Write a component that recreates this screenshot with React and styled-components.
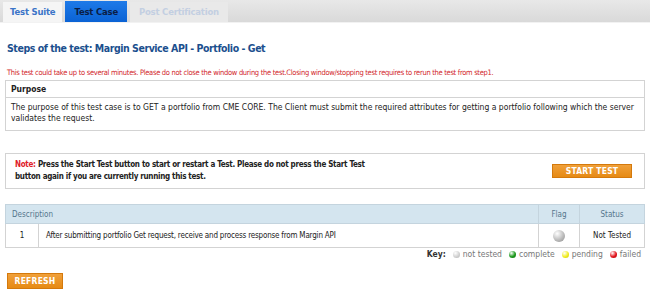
import React from 'react';
import styled, { createGlobalStyle } from 'styled-components';

const GlobalStyle = createGlobalStyle`
  body {
    margin: 0;
    background: #fff;
    font-family: "Liberation Sans Narrow", "DejaVu Sans Condensed", "Liberation Sans", Arial, sans-serif;
  }
`;

const TabBar = styled.div`
  height: 22px;
  display: flex;
  align-items: flex-end;
  gap: 3px;
  padding-left: 3px;
  background: linear-gradient(#e8e8e8, #d9d9d9);
  border-bottom: 1px solid #f2f2f2;
`;

const Tab = styled.div`
  padding: 0 ${(p) => p.$pad || 7}px;
  display: flex;
  align-items: center;
  font-family: Verdana, "DejaVu Sans", sans-serif;
  font-size: 8.5px;
  font-weight: 700;
  letter-spacing: -0.2px;
  color: ${(p) => (p.$active ? '#0b1e45' : p.$disabled ? '#c3cfe2' : '#3b74c8')};
  background: ${(p) =>
    p.$active ? 'linear-gradient(#1e7ae8, #0a62d4)' : p.$disabled ? '#e9e9e9' : '#f5f5f5'};
  height: ${(p) => (p.$active ? 21 : 20)}px;
`;

const Page = styled.div`
  padding: 0 5px;
`;

const Heading = styled.h1`
  margin: 18px 0 0 2px;
  font-size: 10.5px;
  font-weight: 700;
  letter-spacing: -0.45px;
  color: #1b4f8e;
  line-height: 14px;
`;

const Warning = styled.p`
  margin: 13px 0 0 2px;
  font-size: 7.5px;
  letter-spacing: -0.3px;
  color: #d21f2c;
  line-height: 10px;
`;

const Box = styled.div`
  border: 1px solid #d3d3d3;
  margin-top: ${(p) => p.$top}px;
`;

const BoxHead = styled.div`
  height: 16px;
  padding: 0 5px;
  display: flex;
  align-items: center;
  font-size: 8.5px;
  font-weight: 700;
  color: #222;
  border-bottom: 1px solid #d3d3d3;
`;

const BoxBody = styled.div`
  padding: 4px 5px 6px;
  font-size: 8.5px;
  line-height: 11px;
  color: #222;
`;

const NoteBox = styled(Box)`
  height: 34px;
  display: flex;
  align-items: center;
  justify-content: space-between;
  padding: 0 12px 0 9px;
`;

const NoteText = styled.p`
  margin: 0;
  width: 368px;
  font-size: 8px;
  font-weight: 700;
  letter-spacing: -0.3px;
  line-height: 12px;
  color: #222;
`;

const NoteLabel = styled.span`
  color: #e0202a;
`;

const OrangeButton = styled.button`
  display: block;
  width: ${(p) => p.$w}px;
  height: ${(p) => p.$h}px;
  padding: 0;
  border: 1px solid #d4790c;
  background: linear-gradient(#f0a03a, #e68a14);
  color: #fff;
  font-family: inherit;
  font-size: 8.5px;
  font-weight: 700;
  letter-spacing: 0.2px;
  cursor: pointer;
`;

const Table = styled.table`
  width: 100%;
  margin-top: 15px;
  border-collapse: collapse;
  border: 1px solid #d3d3d3;
`;

const Th = styled.th`
  height: 18px;
  padding: 0 ${(p) => (p.$left ? 6 : 2)}px;
  background: #d4e5ef;
  border: 1px solid #c4d4de;
  font-size: 8px;
  font-weight: 400;
  color: #55768c;
  text-align: ${(p) => (p.$left ? 'left' : 'center')};
`;

const Td = styled.td`
  height: 23px;
  width: ${(p) => p.$w || 'auto'};
  padding: 0 ${(p) => (p.$left ? 7 : 2)}px;
  border: 1px solid #d3d3d3;
  font-size: 8px;
  letter-spacing: ${(p) => (p.$left ? '-0.2px' : '0')};
  color: #222;
  text-align: ${(p) => (p.$left ? 'left' : 'center')};
`;

const Ball = styled.span`
  display: inline-block;
  width: ${(p) => p.$size}px;
  height: ${(p) => p.$size}px;
  border-radius: 50%;
  vertical-align: middle;
  background: radial-gradient(circle at 35% 30%, #fff 0%, ${(p) => p.$color} 55%, ${(p) => p.$dark} 100%);
`;

const Key = styled.div`
  display: flex;
  justify-content: flex-end;
  align-items: center;
  gap: 7px;
  height: 10px;
  margin-top: 1px;
  padding-right: 4px;
  font-size: 8.5px;
  color: #777;
`;

const KeyItem = styled.span`
  display: inline-flex;
  align-items: center;
  gap: 3px;
`;

const KeyLabel = styled.b`
  color: #333;
`;

const Footer = styled.div`
  display: flex;
  margin: 14px 0 0 2px;
`;

const keys = [
  { label: 'not tested', color: '#d2d2d2', dark: '#b0b0b0' },
  { label: 'complete', color: '#1c9a1c', dark: '#0b6e0b' },
  { label: 'pending', color: '#f2ee22', dark: '#c9c20a' },
  { label: 'failed', color: '#e3141c', dark: '#a80a0f' },
];

export default function App() {
  return (
    <>
      <GlobalStyle />
      <TabBar>
        <Tab>Test Suite</Tab>
        <Tab $active $pad={9}>Test Case</Tab>
        <Tab $disabled $pad={9}>Post Certification</Tab>
      </TabBar>
      <Page>
        <Heading>Steps of the test: Margin Service API - Portfolio - Get</Heading>
        <Warning>
          This test could take up to several minutes. Please do not close the window during the test.Closing window/stopping test requires to rerun the test from step1.
        </Warning>
        <Box $top={2}>
          <BoxHead>Purpose</BoxHead>
          <BoxBody>
            The purpose of this test case is to GET a portfolio from CME CORE. The Client must submit the required attributes for getting a portfolio following which the server validates the request.
          </BoxBody>
        </Box>
        <NoteBox $top={22}>
          <NoteText>
            <NoteLabel>Note:</NoteLabel> Press the Start Test button to start or restart a Test. Please do not press the Start Test button again if you are currently running this test.
          </NoteText>
          <OrangeButton $w={80} $h={14}>START TEST</OrangeButton>
        </NoteBox>
        <Table>
          <thead>
            <tr>
              <Th $left colSpan={2}>Description</Th>
              <Th>Flag</Th>
              <Th>Status</Th>
            </tr>
          </thead>
          <tbody>
            <tr>
              <Td $w="28px">1</Td>
              <Td $left>After submitting portfolio Get request, receive and process response from Margin API</Td>
              <Td $w="36px"><Ball $size={12} $color="#bdbdbd" $dark="#8a8a8a" /></Td>
              <Td $w="60px">Not Tested</Td>
            </tr>
          </tbody>
        </Table>
        <Key>
          <KeyLabel>Key:</KeyLabel>
          {keys.map((k) => (
            <KeyItem key={k.label}>
              <Ball $size={7} $color={k.color} $dark={k.dark} />
              {k.label}
            </KeyItem>
          ))}
        </Key>
        <Footer>
          <OrangeButton $w={56} $h={16}>REFRESH</OrangeButton>
        </Footer>
      </Page>
    </>
  );
}
